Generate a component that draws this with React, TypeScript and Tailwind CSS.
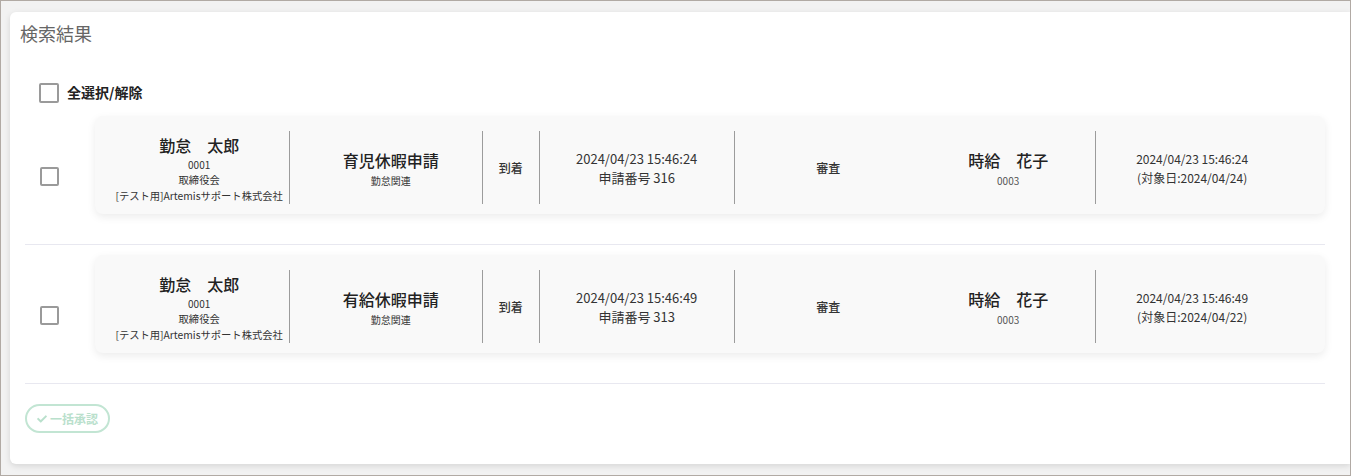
import { FaCheck } from "react-icons/fa";

type Row = {
  name: string;
  code: string;
  role: string;
  company: string;
  kind: string;
  category: string;
  status: string;
  appliedAt: string;
  number: string;
  step: string;
  approver: string;
  approverCode: string;
  updatedAt: string;
  target: string;
};

const rows: Row[] = [
  {
    name: "勤怠　太郎",
    code: "0001",
    role: "取締役会",
    company: "[テスト用]Artemisサポート株式会社",
    kind: "育児休暇申請",
    category: "勤怠関連",
    status: "到着",
    appliedAt: "2024/04/23 15:46:24",
    number: "申請番号 316",
    step: "審査",
    approver: "時給　花子",
    approverCode: "0003",
    updatedAt: "2024/04/23 15:46:24",
    target: "(対象日:2024/04/24)",
  },
  {
    name: "勤怠　太郎",
    code: "0001",
    role: "取締役会",
    company: "[テスト用]Artemisサポート株式会社",
    kind: "有給休暇申請",
    category: "勤怠関連",
    status: "到着",
    appliedAt: "2024/04/23 15:46:49",
    number: "申請番号 313",
    step: "審査",
    approver: "時給　花子",
    approverCode: "0003",
    updatedAt: "2024/04/23 15:46:49",
    target: "(対象日:2024/04/22)",
  },
];

function Box({ size = "h-[19px] w-[19px]" }: { size?: string }) {
  return <span className={`${size} shrink-0 rounded-[2px] border-2 border-[#9a9a9a] bg-white`} />;
}

function Divider() {
  return <div className="w-px self-stretch bg-[#9c9c9c]" />;
}

function RequestRow({ r }: { r: Row }) {
  return (
    <div className="border-b border-[#e8e8f0] pb-[30px] pt-[10px]">
      <div className="flex items-center">
        <div className="mt-[22px] flex w-[70px] justify-start pl-[15px]">
          <Box />
        </div>
        <div className="flex w-[1238px] rounded-lg bg-[#f9f9f9] pb-[10px] pl-[15px] pt-[15px] shadow-[0_3px_8px_rgba(0,0,0,0.08)]">
          <div className="flex h-[73px] items-stretch text-[#333]">
            <div className="flex w-[179px] flex-col items-center pt-[4px]">
              <div className="text-[16px] font-medium leading-[20px] text-[#222]">{r.name}</div>
              <div className="mt-[3px] text-[10px] leading-[14px]">{r.code}</div>
              <div className="text-[10.3px] leading-[16px]">{r.role}</div>
              <div className="text-[10.3px] leading-[16px]">{r.company}</div>
            </div>
            <Divider />
            <div className="flex w-[192px] flex-col items-center pl-[10px] pt-[19px]">
              <div className="text-[16px] font-medium leading-[20px] text-[#222]">{r.kind}</div>
              <div className="mt-[4px] text-[10px] leading-[14px]">{r.category}</div>
            </div>
            <Divider />
            <div className="flex w-[56px] items-center justify-center text-[12px] font-medium">{r.status}</div>
            <Divider />
            <div className="flex w-[194px] flex-col items-center justify-center text-[13px] leading-[19px]">
              <div>{r.appliedAt}</div>
              <div>{r.number}</div>
            </div>
            <Divider />
            <div className="flex w-[187px] items-center justify-center text-[12px] font-medium">{r.step}</div>
            <div className="flex w-[173px] flex-col items-center pt-[19px]">
              <div className="text-[16px] font-medium leading-[20px] text-[#222]">{r.approver}</div>
              <div className="mt-[4px] text-[10px] leading-[14px] text-[#555]">{r.approverCode}</div>
            </div>
            <Divider />
            <div className="flex w-[193px] flex-col items-center justify-center text-[12px] leading-[19px]">
              <div>{r.updatedAt}</div>
              <div>{r.target}</div>
            </div>
          </div>
        </div>
      </div>
    </div>
  );
}

export default function App() {
  return (
    <div
      className="h-[476px] w-[1351px] overflow-hidden border border-[#b1aaa4] bg-[#f2f2f2] pl-[9px] pt-[11px]"
      style={{ fontFamily: '"Noto Sans CJK JP", "Noto Sans", sans-serif' }}
    >
      <div className="h-[452px] w-[1340px] rounded-l-md bg-white pt-[9px] shadow-[0_2px_6px_rgba(0,0,0,0.12)]">
        <h2 className="pl-[10px] text-[18px] leading-[24px] text-[#666]">検索結果</h2>
        <div className="mt-[37px] flex items-center gap-[8px] pl-[29px]">
          <Box size="h-[20px] w-[20px]" />
          <span className="text-[14px] font-bold text-[#222]">全選択/解除</span>
        </div>
        <div className="ml-[15px] mt-[3px] w-[1300px]">
          {rows.map((r, i) => (
            <RequestRow key={i} r={r} />
          ))}
        </div>
        <div className="ml-[15px] mt-[20px]">
          <button className="flex h-[29px] w-[85px] items-center justify-center gap-[3px] rounded-full border-2 border-[#c2e5d3] text-[12px] font-bold text-[#b9e0cc]">
            <FaCheck className="h-[10px] w-[10px]" />
            一括承認
          </button>
        </div>
      </div>
    </div>
  );
}
